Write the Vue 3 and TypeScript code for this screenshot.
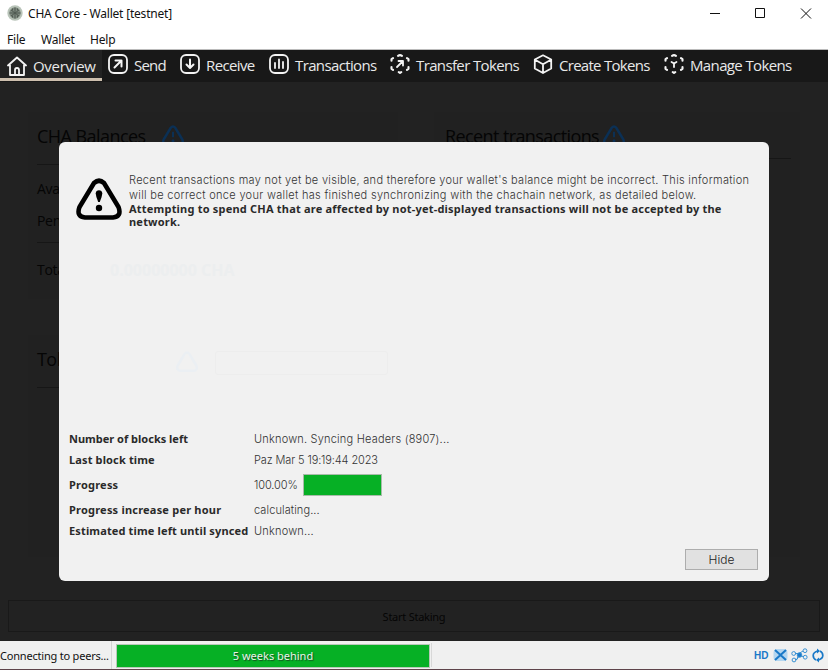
<script setup lang="ts">
interface NavItem { label: string; icon: string }

const nav: NavItem[] = [
  { label: 'Overview', icon: 'home' },
  { label: 'Send', icon: 'send' },
  { label: 'Receive', icon: 'receive' },
  { label: 'Transactions', icon: 'chart' },
  { label: 'Transfer Tokens', icon: 'transfer' },
  { label: 'Create Tokens', icon: 'cube' },
  { label: 'Manage Tokens', icon: 'manage' },
]
</script>

<template>
  <div class="window">
    <header class="titlebar">
      <svg class="logo" viewBox="0 0 16 16">
        <circle cx="8" cy="8" r="7.7" fill="#b9c4b9" />
        <circle cx="8" cy="8" r="5.7" fill="#7d887e" />
        <path d="M8 2.500v11M2.500 8h11M4 5l8 6M4 11l8-6M5.500 3.500v2M10.500 3.500v2M5.500 10.500v2M10.500 10.500v2" stroke="#505a52" stroke-width="1" />
      </svg>
      <span class="title">CHA Core - Wallet [testnet]</span>
      <svg class="controls" viewBox="0 0 138 28">
        <path d="M20 13.500h10M65.500 8.500h9v9h-9zM111 8.500l10 10M121 8.500l-10 10" fill="none" stroke="#111" />
      </svg>
    </header>
    <nav class="menubar"><span>File</span><span>Wallet</span><span>Help</span></nav>

    <nav class="toolbar">
      <div v-for="item in nav" :key="item.label" class="tab" :class="{ active: item.icon === 'home' }">
        <svg class="icon" viewBox="0 0 20 20" fill="none" stroke="#f4f4f4" stroke-width="1.8" stroke-linecap="round" stroke-linejoin="round">
          <template v-if="item.icon === 'home'">
            <path d="M1 9.500 10 1.500l9 8M3 9v10h14V9M8 19v-5q0-2 2-2t2 2v5" />
          </template>
          <template v-else-if="item.icon === 'send'">
            <rect x="1" y="1" width="18" height="18" rx="5" /><path d="M6.500 13.500 13 7M7.500 6.500H13.500V12.500" stroke-width="2" />
          </template>
          <template v-else-if="item.icon === 'receive'">
            <rect x="1" y="1" width="18" height="18" rx="5" /><path d="M10 5.500v8M6.500 10.500 10 14l3.500-3.500" stroke-width="2" />
          </template>
          <template v-else-if="item.icon === 'chart'">
            <rect x="1" y="1" width="18" height="18" rx="5" /><path d="M6 9v5M10 5.500V14M14 8v6" />
          </template>
          <template v-else-if="item.icon === 'cube'">
            <path d="M10 1.300 18.200 5.500v9L10 19l-8.200-4.500v-9zM2 5.800l8 4.400 8-4.400M10 10.200V19" />
          </template>
          <template v-else>
            <path d="M8 1.800Q10 .5 12 1.800M17 4.200l1.500 1v1.600M18.500 13v1.800L17 15.800M3 15.800l-1.500-1V13M1.500 6.800V5.200L3 4.200M8.800 18.200l1.200.8 1.200-.8" stroke-width="2.100" />
            <path v-if="item.icon === 'transfer'" d="M7 13l5.500-5.500M8.500 7h4.500v4.500" />
            <path v-else d="M7.500 8l2.500 1.500L12.500 8M10 10v3" />
          </template>
        </svg>
        <span class="label" :class="item.icon">{{ item.label }}</span>
      </div>
    </nav>

    <main class="content">
      <div class="panels">
        <div class="column">
          <section class="panel balances">
            <h2><span class="h-balance">CHA Balances</span>
              <svg class="warn small" viewBox="0 0 48 43"><path d="M19.500 5Q24 0 28.500 5L43 29Q45.500 38 38 39H10Q2.500 38 5 29z" fill="none" stroke="currentColor" stroke-width="5" /><path d="M24 13v11" stroke="currentColor" stroke-width="4" /><circle cx="24" cy="31" r="3" fill="currentColor" /></svg>
            </h2>
            <div class="row available">Available:</div>
            <div class="row pending">Pending:</div>
            <div class="row total">Total:</div>
          </section>
          <section class="panel tokens"><h2>Token Balances</h2></section>
        </div>
        <section class="panel recent">
          <h2><span class="h-recent">Recent transactions</span>
            <svg class="warn small" viewBox="0 0 48 43"><path d="M19.500 5Q24 0 28.500 5L43 29Q45.500 38 38 39H10Q2.500 38 5 29z" fill="none" stroke="currentColor" stroke-width="5" /><path d="M24 13v11" stroke="currentColor" stroke-width="4" /><circle cx="24" cy="31" r="3" fill="currentColor" /></svg>
          </h2>
        </section>
      </div>
      <button class="staking">Start Staking</button>
    </main>

    <footer class="statusbar">
      <span class="peers">Connecting to peers...</span>
      <div class="sync"><span>5 weeks behind</span></div>
      <span class="divider"></span>
      <div class="status-icons">
        <b>HD</b>
        <svg viewBox="0 0 15 14"><rect x=".5" y="1" width="14" height="12" rx="4" fill="#b4d6f0" /><path d="M2 2l11 10M13 2 2 12" stroke="#1a79c8" stroke-width="2" /></svg>
        <svg class="peers-icon" viewBox="0 0 17 15" fill="none" stroke="#3a91d3" stroke-width="1"><path d="M4 5.500h4l4-2.500M4 11.500h2l2-4 4 1M8 7.500l-2 3" /><circle cx="2.700" cy="5.500" r="1.900" /><circle cx="3" cy="12" r="1.900" /><circle cx="14" cy="2.700" r="1.900" /><circle cx="14.200" cy="9.200" r="1.900" /><circle cx="8.500" cy="7" r="2.300" fill="#1a79c8" /></svg>
        <svg class="refresh" viewBox="0 0 12 15" fill="none" stroke="#1a79c8" stroke-width="1.700"><path d="M4 12Q1.200 10.500 1.200 7.500T5.500 3M8 3Q10.800 4.500 10.800 7.500T6.500 12" /><path d="M5 .5 8 3 5 5.500zM7 9.500 4 12l3 2.500z" fill="#1a79c8" stroke="none" /></svg>
      </div>
    </footer>

    <div class="modal" role="dialog">
      <div class="notice">
        <svg class="warn" viewBox="0 0 48 43"><path d="M19 5Q24 .5 29 5L43.500 29Q47 38.500 38 39.500H10Q1 38.500 4.500 29z" fill="none" stroke="#000" stroke-width="4.600" /><path d="M20.700 15.500Q21 12.300 24 12.300t3.300 3.200Q27 19 24.800 24h-1.600Q21 19 20.700 15.500z" /><circle cx="24" cy="30" r="3.200" /></svg>
        <div class="notice-text">
          <p class="n1">Recent transactions may not yet be visible, and therefore your wallet's balance might be incorrect. This information</p>
          <p class="n2">will be correct once your wallet has finished synchronizing with the chachain network, as detailed below.</p>
          <p class="n3">Attempting to spend CHA that are affected by not-yet-displayed transactions will not be accepted by the</p>
          <p class="n4">network.</p>
        </div>
      </div>
      <div class="faded-total">0.00000000 CHA</div>
      <div class="faded-search">
        <svg class="warn small" viewBox="0 0 48 43"><path d="M19.500 5Q24 0 28.500 5L43 29Q45.500 38 38 39H10Q2.500 38 5 29z" fill="none" stroke="currentColor" stroke-width="5" /></svg>
        <span></span>
      </div>
      <dl class="details">
        <dt class="d1">Number of blocks left</dt><dd class="v1">Unknown. Syncing Headers (8907)...</dd>
        <dt class="d2">Last block time</dt><dd class="v2">Paz Mar 5 19:19:44 2023</dd>
        <dt class="d3">Progress</dt><dd class="v3"><span>100.00%</span><i class="bar"></i></dd>
        <dt class="d4">Progress increase per hour</dt><dd class="v4">calculating...</dd>
        <dt class="d5">Estimated time left until synced</dt><dd class="v5">Unknown...</dd>
      </dl>
      <button class="hide">Hide</button>
    </div>
  </div>
</template>

<style>
body { margin: 0; overflow: hidden; }
</style>

<style scoped>
* { box-sizing: border-box; }
.window { position: relative; display: flex; flex-direction: column; width: 828px; height: 670px; overflow: hidden; background: #fff; font-family: "Open Sans", "Noto Sans", sans-serif; white-space: nowrap; }
.titlebar { display: flex; align-items: center; height: 28px; padding-left: 7px; flex: none; font: 12px/28px "Noto Sans", sans-serif; color: #111; }
.logo { width: 16px; height: 16px; margin-top: -2px; }
.title { margin-left: 5px; letter-spacing: -.2px; }
.controls { width: 138px; height: 28px; margin-left: auto; }
.menubar { display: grid; grid-template-columns: 34px 49px 60px; height: 22px; padding-left: 7px; border-bottom: 1px solid #bbb; font: 12px/23px "Noto Sans", sans-serif; letter-spacing: -.2px; color: #111; flex: none; }
.toolbar { display: grid; grid-template-columns: 102px 72px 89px 121px 143px 131px 1fr; height: 32px; background: #181818; color: #e9e9e9; font-size: 15px; line-height: 30px; flex: none; }
.tab { display: flex; padding-left: 6px; height: 31px; }
.tab.active { background: #222; border-bottom: 3px solid #cdbfae; }
.icon { width: 20px; height: 20px; margin: 4px 6px 0 0; flex: none; }
.active .icon { margin: 6px 6px 0 1px; }
.active .label { padding-top: 1px; }
.label.home { letter-spacing: -.3px; }
.label.send { letter-spacing: -.8px; }
.label.receive, .label.chart, .label.transfer { letter-spacing: -.63px; }
.label.cube { letter-spacing: -.72px; }
.label.manage { letter-spacing: -.63px; }
.content { flex: none; height: 559px; background: #222; padding: 30px 8px 8px; color: #050505; }
.panels { display: flex; gap: 36px; height: 445px; padding: 0 20px; }
.column { display: flex; flex-direction: column; gap: 36px; width: 370px; }
.panel { background: #212121; padding: 0 9px; }
.balances { height: 187px; }
.tokens { height: 222px; }
.recent { width: 366px; height: 445px; padding-left: 11px; }
h2 { margin: 0; height: 53px; border-bottom: 1px solid #161616; font-size: 18px; font-weight: 400; line-height: 49px; letter-spacing: -.55px; display: flex; }
.recent h2 { height: 47px; letter-spacing: -.6px; }
.balances h2 .warn { margin-left: 15px; }
.recent .warn { margin-left: 3px; }
.warn.small { width: 24px; height: 22px; margin-top: 13px; color: #0b3055; flex: none; }
.row { height: 32px; font-size: 14px; line-height: 32px; letter-spacing: -.3px; }
.available { margin-top: 8px; }
.pending { height: 38px; border-bottom: 1px solid #161616; }
.total { margin-top: 11px; }
.staking { display: block; width: 812px; height: 32px; margin-top: 43px; border: 1px solid #191919; background: transparent; color: #050505; font: 11px "Noto Sans", sans-serif; letter-spacing: -.25px; padding: 0; }
.statusbar { display: flex; height: 29px; background: #f0f0f0; border-bottom: 1px solid #5e434a; flex: none; color: #111; }
.peers { width: 112px; padding: 2px 0 0; border-right: 1px solid #d4d4d4; font: 11px/26px "Noto Sans", sans-serif; letter-spacing: -.2px; }
.sync { width: 314px; height: 24px; margin: 3px 1px 0 4px; border: 1px solid #b8c7b9; background: #06b025; color: #e7f5e8; text-align: center; font: 11px/21px "Noto Sans", sans-serif; text-shadow: 1px 1px 1px #164d20; }
.divider { width: 1px; background: #d8d8d8; margin: 2px 0; }
.status-icons { margin-left: auto; padding-right: 4px; display: flex; align-items: center; }
.status-icons b { width: 19px; color: #1a79c8; font: 700 10px "Liberation Sans", sans-serif; }
.status-icons svg { width: 15px; height: 14px; }
.status-icons .peers-icon { width: 17px; height: 15px; margin: 0 4px 0 3px; }
.status-icons .refresh { width: 12px; height: 15px; }
.modal { position: absolute; left: 59px; top: 142px; width: 710px; height: 439px; border-radius: 6px; background: #f1f1f1; padding: 31px 11px 11px 10px; display: flex; flex-direction: column; color: #333; font: 300 11px "Inter", sans-serif; }
.notice { display: flex; height: 88px; }
.notice .warn { width: 48px; height: 43px; margin: 5px 6px 0 6px; flex: none; }
.notice p { margin: 0; line-height: 15px; width: max-content; }
.notice .n1 { letter-spacing: .295px; }
.notice .n2 { line-height: 14px; letter-spacing: .31px; }
.notice p.n3, .notice p.n4 { font: 700 11px/13px "Noto Sans", sans-serif; letter-spacing: .205px; color: #2a2a2a; }
.faded-total { height: 20px; margin-left: 41px; color: #eceeef; font: 700 16px/18px "Open Sans", sans-serif; }
.faded-search { display: flex; height: 148px; padding: 70px 0 0 106px; }
.faded-search .warn { margin-top: 0; color: #ebeff3; }
.faded-search span { width: 173px; height: 24px; margin-left: 16px; border: 1px solid #ededed; border-radius: 3px; }
.details { display: grid; grid-template-columns: 185px 1fr; grid-template-rows: 21px 21px 29px 21px 21px; align-items: center; margin: -1px 0 0; }
dt { font: 700 11px "Noto Sans", sans-serif; width: max-content; color: #2a2a2a; }
.d2, .d5 { letter-spacing: .14px; }
.d3, .d4 { letter-spacing: .21px; }
dd { margin: 0; width: max-content; display: flex; align-items: center; }
.v1 { letter-spacing: .2px; }
.v2 { letter-spacing: -.12px; }
.v4 { letter-spacing: .1px; }
.v5 { letter-spacing: .2px; }
.v3 span { width: 49px; letter-spacing: -.1px; }
.bar { width: 79px; height: 22px; background: #06b025; border: 1px solid #a9bbaa; }
.hide { width: 73px; height: 21px; margin: auto 0 0 auto; padding: 0; border: 1px solid #adadad; background: #e1e1e1; color: #222; font: 300 12px "Inter", sans-serif; }
</style>
